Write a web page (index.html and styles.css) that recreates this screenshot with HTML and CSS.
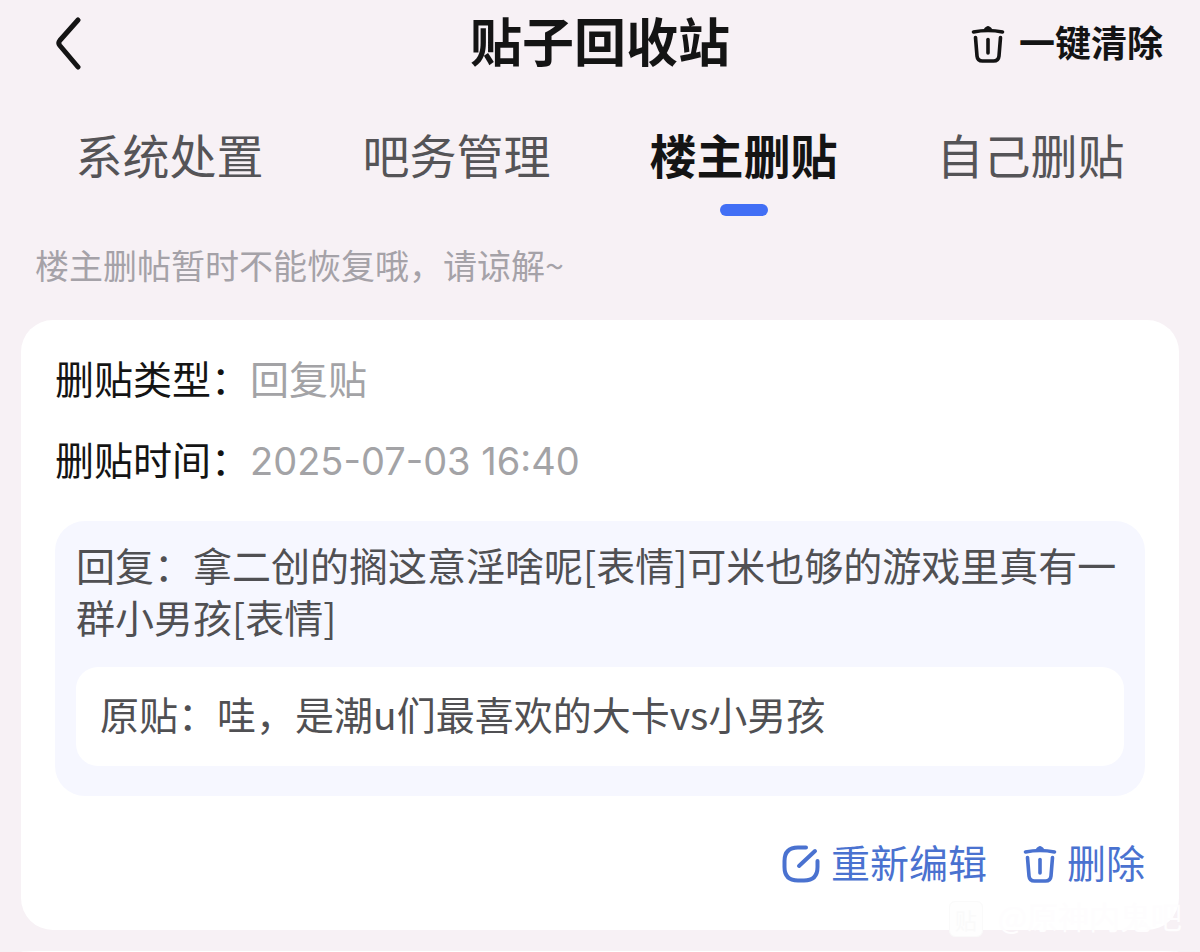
FILE: index.html
```html
<!DOCTYPE html>
<html lang="zh-CN">
<head>
<meta charset="utf-8">
<meta name="viewport" content="width=device-width, initial-scale=1">
<title>贴子回收站</title>
<link rel="stylesheet" href="styles.css">
</head>
<body>
<header class="topbar">
  <button class="back" type="button" aria-label="返回">
    <svg width="28" height="56" viewBox="0 0 28 56" fill="none" stroke="currentColor" stroke-width="5" stroke-linecap="round" stroke-linejoin="round"><path d="M22 4 3.800 24.500Q1.800 27 3.800 29.500L22 51"/></svg>
  </button>
  <h1 class="title">贴子回收站</h1>
  <button class="clear" type="button">
    <svg width="34" height="40" viewBox="0 0 34 40" fill="none" stroke="currentColor" stroke-width="3.600" stroke-linecap="round" stroke-linejoin="round"><path d="M2.500 8Q17 5 31.500 8"/><path d="M15 5 17 3.800 19 5"/><path d="M4.500 13.500 6 32Q6.500 37 11.500 37H22.500Q27.500 37 28 32L29.500 13.500"/><path d="M17 15.500V29"/></svg>
    <span class="label">一键清除</span>
  </button>
</header>
<nav class="tabs">
  <button class="tab" type="button">系统处置</button>
  <button class="tab" type="button">吧务管理</button>
  <button class="tab active" type="button" aria-current="page">楼主删贴</button>
  <button class="tab" type="button">自己删贴</button>
</nav>
<main class="feed">
  <p class="hint">楼主删帖暂时不能恢复哦，请谅解~</p>
  <article class="card">
    <dl class="facts">
      <div class="fact"><dt>删贴类型：</dt><dd>回复贴</dd></div>
      <div class="fact"><dt>删贴时间：</dt><dd class="date">2025-07-03 16:40</dd></div>
    </dl>
    <section class="reply">
      <p>回复：拿二创的搁这意淫啥呢[表情]可米也够的游戏里真有一群小男孩[表情]</p>
      <p class="origin">原贴：哇，是潮u们最喜欢的大卡vs小男孩</p>
    </section>
    <div class="actions">
      <button class="action" type="button">
        <svg width="40" height="40" viewBox="0 0 40 40" fill="none" stroke="currentColor" stroke-width="4" stroke-linecap="round"><path d="M25 3.500H17C8 3.500 3.500 8 3.500 17V23C3.500 32 8 36.500 17 36.500H23C32 36.500 36.500 32 36.500 23V17"/><path d="M18 22 34 7"/></svg>
        <span class="label">重新编辑</span>
      </button>
      <button class="action" type="button">
        <svg width="34" height="40" viewBox="0 0 34 40" fill="none" stroke="currentColor" stroke-width="3.600" stroke-linecap="round" stroke-linejoin="round"><path d="M2.500 8Q17 5 31.500 8"/><path d="M15 5 17 3.800 19 5"/><path d="M4.500 13.500 6 32Q6.500 37 11.500 37H22.500Q27.500 37 28 32L29.500 13.500"/><path d="M17 15.500V29"/></svg>
        <span class="label">删除</span>
      </button>
    </div>
  </article>
  <div class="next-card"></div>
</main>
<div class="watermark"><span class="mark">贴</span><span class="label">@原神内鬼吧</span></div>
</body>
</html>
```
FILE: styles.css
```css
* { box-sizing: border-box; }

body {
  margin: 0;
  min-height: 100vh;
  display: flex;
  flex-direction: column;
  position: relative;
  background: #f7f1f5;
  color: #141414;
  font-family: "Noto Sans CJK SC", sans-serif;
}

button {
  padding: 0;
  border: 0;
  background: none;
  color: inherit;
  font: inherit;
  cursor: pointer;
}

svg { display: block; flex: none; }
h1, p, dl, dd { margin: 0; }
.label { padding-bottom: 6px; }

.topbar {
  display: grid;
  grid-template-columns: 1fr auto 1fr;
  align-items: center;
  height: 88px;
  padding: 0 37px;
}
.back { justify-self: start; padding-left: 19px; }
.title { padding-bottom: 8px; font-size: 52px; line-height: 80px; font-weight: 700; }
.clear {
  justify-self: end;
  display: flex;
  align-items: center;
  gap: 14px;
  font-size: 36px;
  font-weight: 700;
}

.tabs {
  display: grid;
  grid-template-columns: repeat(4, 1fr);
  padding: 36px 26px 0;
}
.tab {
  display: flex;
  flex-direction: column;
  align-items: center;
  gap: 20px;
  font-size: 47px;
  line-height: 60px;
  color: #555457;
}
.tab.active { color: #141414; font-weight: 700; }
.tab::after { content: ""; width: 48px; height: 12px; border-radius: 6px; }
.tab.active::after { background: #426ff5; }

.feed { flex: 1; display: flex; flex-direction: column; padding: 29px 21px 0; }
.hint { padding: 0 14px; font-size: 34px; line-height: 40px; color: #a5a2a8; }

.card {
  margin-top: 35px;
  padding: 31px 34px 39px;
  border-radius: 32px;
  background: #fff;
}
.facts { display: grid; gap: 29px; font-size: 39px; line-height: 52px; }
.fact { display: flex; align-items: baseline; }
.fact dd { color: #a3a3a6; }
.fact .date { font-family: Inter, sans-serif; font-size: 38px; }

.reply {
  margin-top: 34px;
  padding: 17px 21px 30px;
  border-radius: 30px;
  background: #f6f7ff;
  color: #505053;
  font-size: 39px;
  line-height: 52px;
}
.origin { margin-top: 25px; padding: 20px 24px 27px; border-radius: 22px; background: #fff; }

.actions {
  display: flex;
  justify-content: flex-end;
  gap: 36px;
  margin-top: 41px;
  color: #4a72d0;
  font-size: 39px;
  line-height: 48px;
}
.action { display: flex; align-items: center; gap: 10px; }

.next-card {
  flex: 1;
  min-height: 1px;
  margin-top: 21px;
  border-radius: 30px 30px 0 0 / 1px 1px 0 0;
  background: #fff;
}

.watermark {
  position: absolute;
  right: 18px;
  bottom: 12px;
  display: flex;
  align-items: center;
  gap: 15px;
  color: #fefdfe;
  font-size: 31px;
  line-height: 36px;
}
.mark {
  width: 34px;
  border: 1px solid #fafafa;
  border-radius: 6px;
  background: #fefefe;
  color: #fafafa;
  font-size: 22px;
  line-height: 34px;
  text-align: center;
}
```
